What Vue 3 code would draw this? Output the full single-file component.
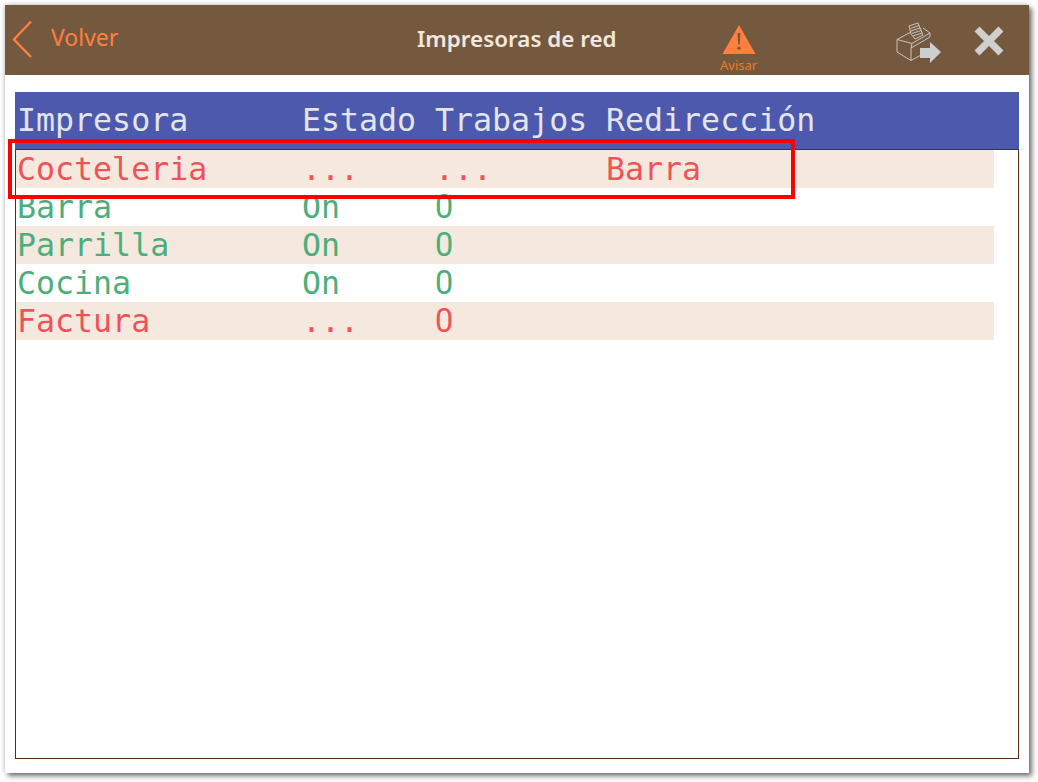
<script setup>
const rows = [
  { name: 'Cocteleria', state: '...', jobs: '...', redirect: 'Barra', tone: 'bad' },
  { name: 'Barra', state: 'On', jobs: '0', redirect: '', tone: 'ok' },
  { name: 'Parrilla', state: 'On', jobs: '0', redirect: '', tone: 'ok' },
  { name: 'Cocina', state: 'On', jobs: '0', redirect: '', tone: 'ok' },
  { name: 'Factura', state: '...', jobs: '0', redirect: '', tone: 'bad' },
]
</script>

<template>
  <div class="page">
    <div class="panel">
      <header class="bar">
        <div class="back">
          <svg class="chev" width="20" height="38" viewBox="0 0 20 38">
            <path d="M19 1.5 L2 19.5 L19 37" fill="none" stroke="#ff7f3f" stroke-width="2.4" />
          </svg>
          <span class="volver">Volver</span>
        </div>
        <div class="title">Impresoras de red</div>
        <div class="warn">
          <svg width="34" height="30" viewBox="0 0 34 30">
            <path d="M17 0 L33.5 29 H0.5 Z" fill="#ff7f3f" />
            <path d="M15.6 8 H18.4 L17.7 19.5 H16.3 Z" fill="#75593f" />
            <circle cx="17" cy="23.2" r="1.6" fill="#75593f" />
          </svg>
          <span class="avisar">Avisar</span>
        </div>
        <div class="actions">
          <svg class="printer" width="48" height="44" viewBox="0 0 48 44">
            <g fill="none" stroke="#cfcfcf" stroke-width="0.9" stroke-linejoin="round">
              <path d="M2 17.5 L16 10 M28 6 L35 11 L17 21.5 L2 17.5 M2 17.5 V30 L16 38.5 V26 L35 15 V11 M17 21.5 L16 26 M16 38.5 L26 33" />
              <path d="M16 12 L14 4 L23 1 L28 13 L20 17 Z" />
              <path d="M15.5 6.5 L24 3.5 M16 9 L25 6 M17 11.5 L26 8.5 M18 14 L27 11" />
            </g>
            <path d="M25 26 H35 V20 L46 30 L35 41 V36 H25 Z" fill="#cfcfcf" />
          </svg>
          <svg class="close" width="30" height="30" viewBox="0 0 30 30">
            <path d="M3 3 L27 27 M27 3 L3 27" stroke="#cfcfcf" stroke-width="7" />
          </svg>
        </div>
      </header>
      <main class="content">
        <div class="frame">
          <div class="grid head">
            <span>Impresora</span><span>Estado</span><span>Trabajos</span><span>Redirección</span>
          </div>
          <div class="list">
            <div v-for="r in rows" :key="r.name" class="grid row" :class="r.tone">
              <span>{{ r.name }}</span><span>{{ r.state }}</span><span :class="{ digit: r.jobs === '0' }">{{ r.jobs }}</span><span>{{ r.redirect }}</span>
            </div>
          </div>
        </div>
      </main>
      <div class="highlight"></div>
    </div>
  </div>
</template>

<style>
html, body { margin: 0; background: #fff; }
</style>

<style scoped>
.page {
  width: 1038px;
  height: 782px;
  padding: 5px 9px 9px 5px;
  box-sizing: border-box;
  overflow: hidden;
}
.panel {
  position: relative;
  width: 1024px;
  height: 768px;
  background: #fff;
  display: flex;
  flex-direction: column;
  box-shadow: 3px 3px 5px rgba(0, 0, 0, 0.55), -1px -1px 4px rgba(0, 0, 0, 0.18);
}
.bar {
  height: 70px;
  background: #75593f;
  position: relative;
  flex: none;
}
.back {
  position: absolute;
  left: 7px;
  top: 15px;
  display: flex;
  align-items: center;
}
.volver {
  margin-left: 19px;
  margin-top: -5px;
  color: #ff7f3f;
  font: 400 23px "Noto Sans", sans-serif;
}
.title {
  position: absolute;
  left: 412px;
  top: 18px;
  color: #f2e7de;
  font: 600 22.4px "Noto Sans", sans-serif;
  white-space: nowrap;
}
.warn {
  position: absolute;
  left: 717px;
  top: 20px;
  width: 34px;
  display: flex;
  flex-direction: column;
  align-items: flex-start;
}
.avisar {
  margin-top: 3px;
  margin-left: -2px;
  color: #e67e22;
  font: 400 13px "Noto Sans", sans-serif;
  line-height: 15px;
  white-space: nowrap;
}
.actions {
  position: absolute;
  left: 890px;
  top: 17px;
  display: flex;
  align-items: flex-start;
  gap: 31px;
}
.close { margin-top: 4px; }
.content {
  flex: 1;
  padding: 17px 10px 14px;
  display: flex;
  min-height: 0;
}
.frame {
  flex: 1;
  display: flex;
  flex-direction: column;
  box-sizing: border-box;
}
.grid {
  display: grid;
  grid-template-columns: 285px 133px 171px 1fr;
  padding-left: 2px;
  font-family: "DejaVu Sans Mono", monospace;
  font-size: 31.6px;
  white-space: nowrap;
}
.head {
  height: 57px;
  line-height: 56px;
  background: #4d59ac;
  color: #e3e5ee;
  flex: none;
}
.list {
  flex: 1;
  border: 1px solid #5a2a0c;
  padding-right: 24px;
}
.row {
  height: 38px;
  line-height: 39px;
  padding-left: 1px;
}
.row:nth-child(odd) { background: #f4e8df; }
.digit {
  font-family: Roboto, sans-serif;
  font-size: 32.4px;
}
.bad { color: #ef5358; }
.ok { color: #4caf7a; }
.highlight {
  position: absolute;
  left: 3px;
  top: 134px;
  width: 787px;
  height: 60px;
  border: 4px solid #ff0000;
  box-sizing: border-box;
}
</style>
